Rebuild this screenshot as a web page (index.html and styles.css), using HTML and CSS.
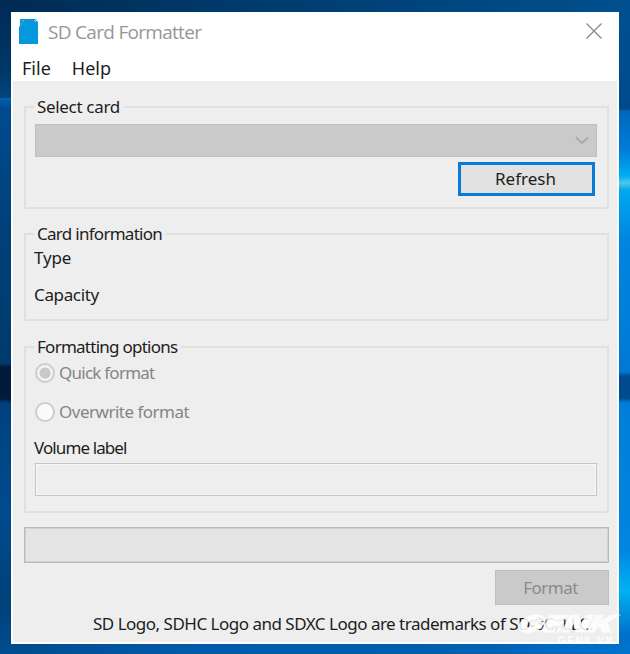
FILE: index.html
```html
<!DOCTYPE html>
<html lang="en">
<head>
<meta charset="utf-8">
<title>SD Card Formatter</title>
<link rel="stylesheet" href="styles.css">
</head>
<body>
<main class="window">
  <header class="titlebar">
    <svg class="card-icon" width="20" height="25" viewBox="0 0 20 25"><path d="M1 0H16L19 3V25H0V8L1 7Z" fill="#0797dc"/><path d="M2 5h1M4 2h1M15 1l2 2" stroke="#9bd9f5" stroke-width="1"/></svg>
    <h1 class="title">SD Card Formatter</h1>
    <svg class="close" width="16" height="16" viewBox="0 0 16 16"><path d="M.5.5l15 15M15.500.5L.5 15.500" stroke="#858585" stroke-width="1.2"/></svg>
  </header>
  <nav class="menu"><span class="file">File</span><span class="help">Help</span></nav>
  <div class="content">
    <section class="group select-group">
      <h2 class="legend w-select">Select card</h2>
      <div class="dropdown"><svg width="14" height="9" viewBox="0 0 14 9"><path d="M1 1.500l6 5.500 6-5.500" fill="none" stroke="#a9a9a9" stroke-width="1.700"/></svg></div>
      <button class="refresh"><span>Refresh</span></button>
    </section>
    <section class="group info-group">
      <h2 class="legend w-info">Card information</h2>
      <p class="row type">Type</p>
      <p class="row capacity">Capacity</p>
    </section>
    <section class="group options-group">
      <h2 class="legend w-options">Formatting options</h2>
      <div class="radio quick"><i class="dot checked"></i><span>Quick format</span></div>
      <div class="radio overwrite"><i class="dot"></i><span>Overwrite format</span></div>
      <p class="row volume">Volume label</p>
      <div class="input"></div>
    </section>
    <div class="progress"></div>
    <button class="format"><span>Format</span></button>
    <footer class="notice">SD Logo, SDHC Logo and SDXC Logo are trademarks of SD-3C, LLC.</footer>
  </div>
</main>
<div class="watermark">
  <div class="brand">GENK</div>
  <div class="site">GENK.VN</div>
</div>
</body>
</html>
```
FILE: styles.css
```css
* { box-sizing: border-box; }
body {
  margin: 0;
  width: 630px;
  height: 654px;
  padding: 12px 11px 10px;
  overflow: hidden;
  position: relative;
  font: 17px/22px "Noto Sans", sans-serif;
  color: #1d1d20;
  background:
    linear-gradient(#002b54, #003767 70px, #00457f) 0 0 / 12px 98px no-repeat,
    linear-gradient(#0060b2, #004b8e 10px, #003f77 144px, #003b6d 265px, #001c38 269px, #001c38 301px, #00417d 305px, #004b8d 414px, #004178 504px, #004d91) 0 98px / 12px 556px no-repeat,
    linear-gradient(90deg, #002b53, #003d70 45%, #00508f) 0 0 / 630px 13px no-repeat,
    linear-gradient(90deg, #004b8d, #005baa 30%, #0060b2 75%, #0073ce) 0 643px / 630px 11px no-repeat,
    linear-gradient(#00508f, #004a8c 109px, #0067bd 111px, #007dd8 150px, #00adf0 176px, #52c5ed 183px, #00a9f0 190px, #0085e2 240px, #0078d5 372px, #004b8e 376px, #004b8e 398px, #007ed9 403px, #0085e2 550px, #00b2f3 590px, #0070ca 635px) 618px 0 / 12px 654px no-repeat;
}
h1, h2, p { margin: 0; font-weight: normal; }
.window {
  width: 608px;
  height: 632px;
  background: #eee;
  border: solid #fff;
  border-width: 0 2px 2px;
}
.titlebar {
  height: 38px;
  background: #fff;
  display: flex;
  align-items: center;
  padding: 0 15px 0 6px;
}
.card-icon { flex: none; margin-top: 1px; }
.title {
  flex: 1;
  margin-left: 9px;
  margin-top: 2px;
  font: 19px/26px "Open Sans", sans-serif;
  letter-spacing: -.7px;
  color: #969696;
}
.menu {
  height: 31px;
  background: #fff;
  display: flex;
  gap: 21px;
  padding: 7px 9px 0;
  font-size: 18px;
  line-height: 22px;
}
.content {
  padding: 25px 8px 0 11px;
  display: flex;
  flex-direction: column;
}
.group {
  width: 585px;
  border: 2px solid #e0e0e0;
  padding: 0 9px;
  display: flex;
  flex-direction: column;
}
.legend {
  align-self: flex-start;
  height: 22px;
  margin-top: -12px;
  margin-left: -1px;
  padding: 0 4px 0 3px;
  background: #eee;
  font-size: 17px;
  line-height: 22px;
  white-space: nowrap;
}
.w-select { letter-spacing: -.32px; }
.w-info { letter-spacing: -.72px; }
.w-options { letter-spacing: -.74px; }
.select-group { height: 103px; }
.info-group { height: 88px; margin-top: 24px; }
.options-group { height: 167px; margin-top: 25px; }
.dropdown {
  width: 562px;
  height: 33px;
  margin-top: 6px;
  padding-right: 7px;
  background: #cacaca;
  border: 1px solid #bdbdbd;
  display: flex;
  align-items: center;
  justify-content: flex-end;
}
button {
  font: inherit;
  color: inherit;
  padding: 0;
  margin: 0;
  border-radius: 0;
}
.refresh {
  width: 137px;
  height: 34px;
  margin: 5px 0 0 423px;
  padding-right: 2px;
  border: 3px solid #087bd7;
  background: #e1e1e1;
}
.row { height: 22px; white-space: nowrap; margin-left: -1px; }
.type { margin-top: 2px; letter-spacing: -.2px; }
.capacity { margin-top: 15px; letter-spacing: -.35px; }
.radio { display: flex; align-items: center; gap: 4px; height: 22px; color: #858585; }
.quick { margin-top: 4px; letter-spacing: -.76px; }
.overwrite { margin-top: 17px; letter-spacing: -.5px; }
.dot {
  width: 20px;
  height: 20px;
  border: 2px solid #cdcdcd;
  border-radius: 50%;
  background: #fafafa;
}
.checked { background: radial-gradient(circle, #c8c8c8 5px, #f3f3f3 6px); }
.volume { margin-top: 14px; letter-spacing: -.9px; }
.input {
  width: 562px;
  height: 33px;
  margin-top: 4px;
  border: 1px solid #c5c5c5;
  box-shadow: inset 0 0 0 1px #f8f8f8;
}
.progress {
  height: 36px;
  width: 585px;
  margin-top: 14px;
  border: 1px solid #b8b8b8;
  box-shadow: inset 0 0 0 1px #d2d2d2;
  background: #e4e4e4;
}
.format {
  align-self: flex-end;
  width: 114px;
  height: 35px;
  margin: 7px 0 0;
  padding-right: 3px;
  border: 1px solid #bebebe;
  background: #cacaca;
  color: #8b8b8b;
  letter-spacing: -.5px;
}
.notice {
  margin: 8px 0 0 69px;
  white-space: nowrap;
  letter-spacing: -.5px;
}
.watermark {
  position: absolute;
  left: 511px;
  top: 615px;
  width: 110px;
  height: 32px;
  color: #fff;
}
.brand {
  width: 60px;
  height: 18px;
  margin-left: 3px;
  font: 900 23px/18px Inter, "Liberation Sans", sans-serif;
  -webkit-text-stroke: 1px #fff;
  transform-origin: 0 100%;
  transform: skewX(-28deg) scaleX(1.45);
  opacity: .88;
}
.site {
  margin: 2px 0 0 47px;
  font: bold 10px/12px "Liberation Sans", sans-serif;
  letter-spacing: 1.500px;
  opacity: .9;
}
```
